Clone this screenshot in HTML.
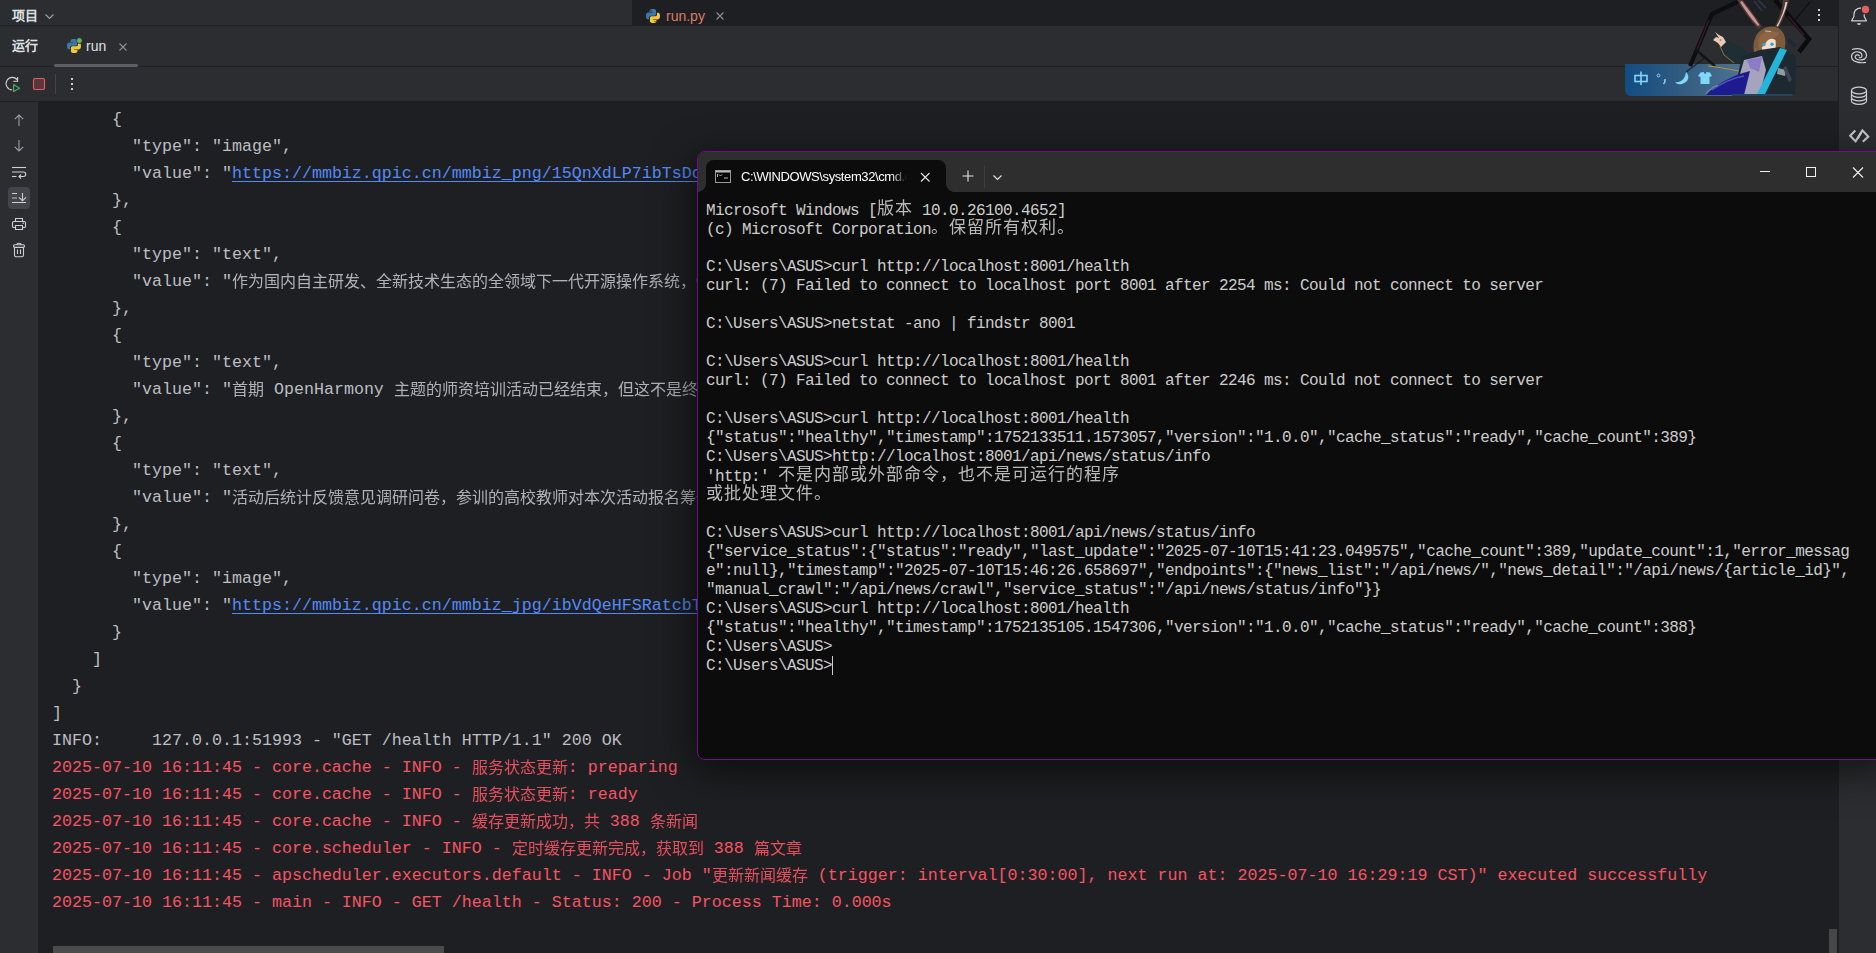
<!DOCTYPE html>
<html lang="zh-CN"><head><meta charset="utf-8">
<style>
*{margin:0;padding:0;box-sizing:border-box}
html,body{width:1876px;height:953px;overflow:hidden;background:#2B2D30;font-family:"Liberation Sans",sans-serif;color:#DFE1E5;position:relative}
.abs{position:absolute}
svg{position:absolute;overflow:visible}
#topL{left:0;top:0;width:632px;height:25px;background:#2B2D30}
#topR{left:632px;top:0;width:1207px;height:25px;background:#1E1F22}
#b1{left:0;top:25px;width:1839px;height:1px;background:#1E1F22}
#runhdr{left:0;top:26px;width:1839px;height:40px;background:#2B2D30}
#b2{left:0;top:66px;width:1839px;height:1px;background:#1E1F22}
#tool{left:0;top:67px;width:1839px;height:34px;background:#2B2D30}
#gut{left:0;top:102px;width:38px;height:851px;background:#2B2D30}
#b3{left:0;top:101px;width:38px;height:1px;background:#1E1F22}
#con{left:38px;top:101px;width:1800px;height:852px;background:#1E1F22;overflow:hidden}
#rside{left:1838px;top:0;width:38px;height:953px;background:#2B2D30;border-left:1px solid #1E1F22}
.mono{font-family:"Liberation Mono",monospace}
.ln{position:absolute;left:14px;height:27px;line-height:27px;font-size:16.6667px;color:#BCBEC4;white-space:pre;font-family:"Liberation Mono",monospace}
.ln.r{color:#F75464}
.ln .lk{color:#548AF7;text-decoration:underline;text-underline-offset:3px}
#lines{left:0;top:5px}
.cj{font-size:16px;position:relative;top:1px;opacity:.92}
.ui{font-size:13px;white-space:pre;line-height:16px}
#term{left:697px;top:151px;width:1200px;height:609px;border:1px solid #6E0F8E;border-radius:8px 0 0 8px;background:#0C0C0C;box-shadow:-4px 10px 40px rgba(0,0,0,.6);overflow:hidden}
#ttl{left:0;top:0;width:100%;height:40px;background:#2E2E2E}
#ttab{left:8px;top:8px;width:240px;height:32px;background:#0C0C0C;border-radius:8px 8px 0 0}
#tlines{left:8px;top:49px}
.tl{position:absolute;left:0;height:19px;line-height:19px;font-size:16px;letter-spacing:-0.6px;color:#CCCCCC;white-space:pre;font-family:"Liberation Mono",monospace}
.tc{letter-spacing:1px;font-size:17px;position:relative;top:-1px;opacity:.9}
</style></head><body>
<div class="abs" id="topL"></div>
<div class="abs" id="topR"></div>
<div class="abs" id="b1"></div>
<div class="abs" id="runhdr"></div>
<div class="abs" id="b2"></div>
<div class="abs" id="tool"></div>
<div class="abs" id="gut"></div>
<div class="abs" id="b3"></div>
<div class="abs" id="rside"></div>

<!-- top-left project -->
<div class="abs ui" style="left:12px;top:8px;font-weight:bold;color:#DFE1E5">项目</div>
<svg style="left:0;top:0" width="1" height="1"><path d="M45.5 14.5 L49.5 18.5 L53.5 14.5" fill="none" stroke="#9FA2A8" stroke-width="1.1"/></svg>

<!-- editor tab -->
<svg style="left:645px;top:8px" width="16" height="16" viewBox="0 0 16 16"><path fill="#3C78AA" d="M7.9 1C4.4 1 4.6 2.5 4.6 2.5V4.1H8V4.6H3.2S1 4.35 1 7.9C1 11.4 2.9 11.3 2.9 11.3H4V9.6S3.95 7.7 5.9 7.7H9.3S11.1 7.73 11.1 5.95V3S11.4 1 7.9 1Z"/><circle cx="6" cy="2.7" r=".6" fill="#1E1F22"/><path fill="#F2C83C" d="M8.1 15C11.6 15 11.4 13.5 11.4 13.5V11.9H8V11.4H12.8S15 11.65 15 8.1C15 4.6 13.1 4.7 13.1 4.7H12V6.4S12.05 8.3 10.1 8.3H6.7S4.9 8.27 4.9 10.05V13S4.6 15 8.1 15Z"/><circle cx="10" cy="13.3" r=".6" fill="#1E1F22"/></svg>
<div class="abs ui" style="left:666px;top:8px;font-size:14px;color:#DB7C68">run.py</div>
<svg style="left:0;top:0" width="1" height="1"><path d="M716.5 12.5 L723.5 19.5 M723.5 12.5 L716.5 19.5" stroke="#8C8F94" stroke-width="1.1"/></svg>

<!-- run header -->
<div class="abs ui" style="left:12px;top:38px;font-weight:bold;color:#DFE1E5">运行</div>
<svg style="left:66px;top:38px" width="16" height="16" viewBox="0 0 16 16"><path fill="#3C78AA" d="M7.9 1C4.4 1 4.6 2.5 4.6 2.5V4.1H8V4.6H3.2S1 4.35 1 7.9C1 11.4 2.9 11.3 2.9 11.3H4V9.6S3.95 7.7 5.9 7.7H9.3S11.1 7.73 11.1 5.95V3S11.4 1 7.9 1Z"/><path fill="#F2C83C" d="M8.1 15C11.6 15 11.4 13.5 11.4 13.5V11.9H8V11.4H12.8S15 11.65 15 8.1C15 4.6 13.1 4.7 13.1 4.7H12V6.4S12.05 8.3 10.1 8.3H6.7S4.9 8.27 4.9 10.05V13S4.6 15 8.1 15Z"/><circle cx="13.3" cy="2.6" r="2.9" fill="#5FB865" stroke="#2B2D30" stroke-width=".8"/></svg>
<div class="abs ui" style="left:86px;top:38px;font-size:14px;color:#DFE1E5">run</div>
<svg style="left:0;top:0" width="1" height="1"><path d="M119.5 43.5 L126.5 50.5 M126.5 43.5 L119.5 50.5" stroke="#8C8F94" stroke-width="1.1"/></svg>
<div class="abs" style="left:54px;top:64px;width:84px;height:3px;background:#5B5E64;border-radius:2px"></div>

<!-- toolbar -->
<svg style="left:0;top:0" width="1" height="1">
<path d="M17.5 80.2 A6.2 6.2 0 1 0 12.2 89.8" fill="none" stroke="#CED0D6" stroke-width="1.1"/>
<path d="M17.6 77 V81.3 H13.2" fill="none" stroke="#CED0D6" stroke-width="1.1"/>
<path d="M13.6 84.6 L19.6 88.2 L13.6 91.6 Z" fill="#213524" stroke="#55A862" stroke-width="1.2" stroke-linejoin="round"/>
<rect x="33.5" y="78.5" width="11" height="11" rx="1.5" fill="#5E3538" stroke="#E06060" stroke-width="1.1"/>
<rect x="55" y="74" width="1" height="20" fill="#43454A"/>
<rect x="71" y="78" width="2" height="2" fill="#CED0D6"/><rect x="71" y="83" width="2" height="2" fill="#CED0D6"/><rect x="71" y="88" width="2" height="2" fill="#CED0D6"/>
</svg>

<!-- gutter icons -->
<svg style="left:0;top:0" width="1" height="1">
<g fill="none" stroke="#9A9DA3" stroke-width="1.1">
<path d="M19 126 V115 M14.8 119.2 L19 115 L23.2 119.2"/>
<path d="M19 140 V151 M14.8 146.8 L19 151 L23.2 146.8"/>
</g>
<rect x="8" y="187" width="22" height="22" rx="4" fill="#43454A"/>
<g fill="none" stroke="#CED0D6" stroke-width="1.1">
<path d="M12 167.5 H26"/>
<path d="M12 172 H23.5 A2.25 2.25 0 0 1 23.5 176.5 H19 M21 174.5 L19 176.5 L21 178.5"/>
<path d="M12 176.5 H16.5"/>
<path d="M12 193.5 H17 M12 202.5 H26 M22.5 193 V200.5 M19 197.3 L22.5 200.8 L26 197.3"/>
<path d="M15.5 221.5 V218.5 H22.5 V221.5 M15 227.5 H13.8 A1.3 1.3 0 0 1 12.5 226.2 V222.8 A1.3 1.3 0 0 1 13.8 221.5 H24.2 A1.3 1.3 0 0 1 25.5 222.8 V226.2 A1.3 1.3 0 0 1 24.2 227.5 H23 M15.5 225.5 H22.5 V229.5 H15.5 Z"/>
<rect x="13.5" y="244.8" width="11" height="2.6" rx="1.3"/><path d="M16.8 244.8 A2.2 1.6 0 0 1 21.2 244.8 M14.5 247.4 V255 A1.8 1.8 0 0 0 16.3 256.8 H21.7 A1.8 1.8 0 0 0 23.5 255 V247.4 M17.5 249.5 V254 M20.5 249.5 V254"/>
</g>
<rect x="12" y="197" width="5" height="2" fill="#7E8187"/>
<rect x="22.6" y="222.6" width="1.3" height="1.3" fill="#CED0D6"/>
</svg>

<!-- console -->
<div class="abs" id="con">
<div class="abs" id="lines">
<div class="ln" style="top:0px">      {</div>
<div class="ln" style="top:27px">        "type": "image",</div>
<div class="ln" style="top:54px">        "value": "<span class="lk">https://mmbiz.qpic.cn/mmbiz_png/15QnXdLP7ibTsDcz4zsNvh</span></div>
<div class="ln" style="top:81px">      },</div>
<div class="ln" style="top:108px">      {</div>
<div class="ln" style="top:135px">        "type": "text",</div>
<div class="ln" style="top:162px">        "value": "<span class="cj">作为国内自主研发、全新技术生态的全领域下一代开源操作系统，</span>OpenHarmony</div>
<div class="ln" style="top:189px">      },</div>
<div class="ln" style="top:216px">      {</div>
<div class="ln" style="top:243px">        "type": "text",</div>
<div class="ln" style="top:270px">        "value": "<span class="cj">首期</span> OpenHarmony <span class="cj">主题的师资培训活动已经结束，但这不是终点</span></div>
<div class="ln" style="top:297px">      },</div>
<div class="ln" style="top:324px">      {</div>
<div class="ln" style="top:351px">        "type": "text",</div>
<div class="ln" style="top:378px">        "value": "<span class="cj">活动后统计反馈意见调研问卷，参训的高校教师对本次活动报名筹备</span></div>
<div class="ln" style="top:405px">      },</div>
<div class="ln" style="top:432px">      {</div>
<div class="ln" style="top:459px">        "type": "image",</div>
<div class="ln" style="top:486px">        "value": "<span class="lk">https://mmbiz.qpic.cn/mmbiz_jpg/ibVdQeHFSRatcbTqHhsYa</span></div>
<div class="ln" style="top:513px">      }</div>
<div class="ln" style="top:540px">    ]</div>
<div class="ln" style="top:567px">  }</div>
<div class="ln" style="top:594px">]</div>
<div class="ln" style="top:621px">INFO:     127.0.0.1:51993 - "GET /health HTTP/1.1" 200 OK</div>
<div class="ln r" style="top:648px">2025-07-10 16:11:45 - core.cache - INFO - <span class="cj">服务状态更新</span>: preparing</div>
<div class="ln r" style="top:675px">2025-07-10 16:11:45 - core.cache - INFO - <span class="cj">服务状态更新</span>: ready</div>
<div class="ln r" style="top:702px">2025-07-10 16:11:45 - core.cache - INFO - <span class="cj">缓存更新成功，共</span> 388 <span class="cj">条新闻</span></div>
<div class="ln r" style="top:729px">2025-07-10 16:11:45 - core.scheduler - INFO - <span class="cj">定时缓存更新完成，获取到</span> 388 <span class="cj">篇文章</span></div>
<div class="ln r" style="top:756px">2025-07-10 16:11:45 - apscheduler.executors.default - INFO - Job "<span class="cj">更新新闻缓存</span> (trigger: interval[0:30:00], next run at: 2025-07-10 16:29:19 CST)" executed successfully</div>
<div class="ln r" style="top:783px">2025-07-10 16:11:45 - main - INFO - GET /health - Status: 200 - Process Time: 0.000s</div>
</div>
<div class="abs" style="left:15px;top:845px;width:391px;height:7px;background:#4A4B4D"></div>
<div class="abs" style="left:1791px;top:828px;width:8px;height:24px;background:#474749"></div>
</div>

<!-- right sidebar icons -->
<svg style="left:0;top:0" width="1" height="1">
<g fill="none" stroke="#CED0D6" stroke-width="1.2">
<path d="M1861 8.2 H1860 A6 6 0 0 0 1854 14.2 V16.5 L1851.6 20.8 H1866.4 L1864.2 16.5 V14.3" stroke-linejoin="round"/>
<path d="M1852 49.5 C1858 47.5 1866.5 49 1866.5 55.5 C1866.5 59 1863 60.2 1859.5 60 C1856 59.8 1854.5 57.5 1855.5 55.8 C1856.5 54.5 1858.5 54.8 1859.5 56"/>
<path d="M1866 62.3 C1860 63.5 1851.5 62 1851.5 56.5 C1851.5 53 1855 51.5 1858 51.8 C1861 52 1862.5 54 1861.8 56.5 C1861.3 58 1859.8 58 1859 57.3"/>
<ellipse cx="1859" cy="90.5" rx="7.5" ry="3.3"/>
<path d="M1851.5 90.5 V101 A7.5 3.3 0 0 0 1866.5 101 V90.5 M1851.5 94 A7.5 3.3 0 0 0 1866.5 94 M1851.5 97.5 A7.5 3.3 0 0 0 1866.5 97.5"/>
</g>
<path d="M1855.3 130.6 L1850.2 135.8 L1855.6 141.4 L1862.4 130.4 L1868.3 136.6 L1862.8 141.8" fill="none" stroke="#C8CACE" stroke-width="2.1" stroke-linejoin="miter" stroke-miterlimit="3"/><path d="M1857.8 138.5 L1861.2 132.6" stroke="#C8CACE" stroke-width="2"/>
<circle cx="1865.5" cy="9.5" r="3.7" fill="#E3605F"/><path d="M1857 23.2 H1861 A2 1.8 0 0 1 1857 23.2 Z" fill="#CED0D6"/>
<rect x="1818" y="9" width="2" height="2" fill="#CED0D6"/><rect x="1818" y="14" width="2" height="2" fill="#CED0D6"/><rect x="1818" y="19" width="2" height="2" fill="#CED0D6"/>
</svg>

<!-- IME + character -->
<svg style="left:1620px;top:0" width="200" height="100" viewBox="0 0 200 100">
<defs>
<linearGradient id="ig" x1="0" y1="0" x2="1" y2="0">
<stop offset="0" stop-color="#134C84"/><stop offset=".35" stop-color="#335C80"/><stop offset=".7" stop-color="#4A7394"/><stop offset="1" stop-color="#2A4660"/>
</linearGradient>
</defs>
<path d="M5 64 H172.5 V96 H11 A6 6 0 0 1 5 90 Z" fill="url(#ig)"/>
<!-- blades -->
<path d="M119 1 L92 14 L70 66" fill="none" stroke="#0D0E12" stroke-width="4.2" stroke-linejoin="miter"/>
<path d="M89 20 L76 52" fill="none" stroke="#4A1A28" stroke-width="1.4" opacity=".8"/>
<path d="M75 49 L95 66" fill="none" stroke="#111216" stroke-width="2.5" opacity=".9"/>
<path d="M66 72 L86 57" fill="none" stroke="#15161A" stroke-width="1.5" opacity=".7"/>
<path d="M155 0 L189 39 L179 52" fill="none" stroke="#0B0C10" stroke-width="4.6" stroke-linejoin="miter"/>
<path d="M168 16 L184 35" fill="none" stroke="#4A1828" stroke-width="1.5" opacity=".8"/>
<path d="M190 2 L175 20" fill="none" stroke="#101116" stroke-width="1.3"/>
<path d="M134 1 L142 11 M138 0 L146 8" fill="none" stroke="#2A3548" stroke-width="2"/>
<path d="M168 40 L176 46" fill="none" stroke="#1E2838" stroke-width="3"/>
<!-- ears -->
<path d="M117 0 C122 8 130 20 138 29 L142 27 C136 16 127 6 123 0 Z" fill="#4E3A32"/>
<path d="M120 2 C125 10 131 19 138 26 L139.5 25 C134 16 127 8 122 1 Z" fill="#C89494"/>
<path d="M163 0 C162 10 158 20 154 28 L158 29 C163 20 167 10 169 0 Z" fill="#4E3A32"/>
<path d="M165.5 2 C164 10 161 19 156.5 26 L158 26.5 C162 18 166 10 167.5 2 Z" fill="#E6CCC4"/>
<!-- hair/head -->
<path d="M134 52 C131 38 140 26 152 26.5 C163 27 167 37 165 47 C164 53 161 56 157 57 L140 57 Z" fill="#7C5A3C"/>
<path d="M141 43 C141 52 146 56 150 55.5 C155 54.5 156.5 49 155.5 40 C150 37 145 38 141 43 Z" fill="#F4DECE"/>
<path d="M138 40 C141 32 150 29 159 33 C157 39 151 37 147 41 C145 45 142 47 139 50 Z" fill="#8E6646"/>
<path d="M136 48 C133 60 128 68 122 76" fill="none" stroke="#9A7238" stroke-width="1"/>
<circle cx="144" cy="44.5" r="1.7" fill="#2AA8C8"/><circle cx="152" cy="44.3" r="1.7" fill="#2AA8C8"/>
<path d="M145 31 L151 31.5" stroke="#A8C8D0" stroke-width="1.2"/>
<!-- arm -->
<path d="M100 44 L106 40 L122 48 L132 57 L129 64 L113 63 L101 55 Z" fill="#1F2D35"/>
<path d="M100 46 L104 55 L114 63" stroke="#B08A30" stroke-width=".8" fill="none"/>
<path d="M95 32 L99 38 L96 37 L93 40 L98 43 L101 47 L106 42 L103 37 L99 35 Z" fill="#F0C8B0"/>
<circle cx="100.5" cy="40" r=".9" fill="#30B0C8"/>
<!-- body -->
<path d="M122 56 L140 50 L160 47 L176 56 L175 94 L120 94 L118 74 Z" fill="#1C2930"/>
<path d="M124 60 L142 56 L146 70 L140 94 L122 94 L120 74 Z" fill="#A6A4BC"/>
<path d="M127 60 L142 57 L139 72 L130 68 Z" fill="#8C7CC8"/>
<path d="M160 48 L167 50 L145 94 L137 94 Z" fill="#24B6DA"/>
<path d="M86 95 C94 86 110 76 130 71 L124 95 Z" fill="#1E1A90"/>
<path d="M92 90 C102 83 112 78 124 76" stroke="#4A5AC0" stroke-width="1.4" fill="none"/>
<path d="M86 94 C89 90 93 87 98 85" stroke="#7888A8" stroke-width="1.3" fill="none"/>
<path d="M88 66 C98 67 108 69 119 71" stroke="#B8962A" stroke-width="1" fill="none"/>
<path d="M158 68 L166 70 L165 76 L157 74 Z" fill="#C8CCD0" opacity=".7"/>
<path d="M166 66 L172 80 L169 82 L163 68 Z" fill="#3A4650"/>
<rect x="112" y="94" width="60" height="2" fill="#26435E"/>
<!-- IME glyphs -->
<g fill="none" stroke="#7FD8F8" stroke-width="1.6">
<rect x="15" y="75.5" width="12" height="6"/>
<path d="M21 71.5 V85"/>
<circle cx="38.5" cy="75.5" r="1.4" stroke-width="1"/>
<path d="M45 79 Q45.5 82 43.5 84"/>
</g>
<path d="M66 72 C70 76 69 82 62 84 C58 84.8 56 83.5 55 82 C60 83 65 80 66 72 Z" fill="#7FD8F8"/>
<path d="M80.5 72.5 L84 72 Q84 74 85 74 Q86 74 86.5 72 L90 72.5 L92 76 L89.5 77 V84 H80.5 V77 L78 76 Z" fill="#7FD8F8"/>
</svg>

<!-- terminal window -->
<div class="abs" id="term">
<div class="abs" id="ttl"></div>
<div class="abs" id="ttab"></div>
<div class="abs" style="left:0;top:32px;width:8px;height:8px;background:radial-gradient(circle 8px at 0 0,#2E2E2E 7.5px,#0C0C0C 8px)"></div>
<div class="abs" style="left:248px;top:32px;width:8px;height:8px;background:radial-gradient(circle 8px at 100% 0,#2E2E2E 7.5px,#0C0C0C 8px)"></div>
<svg style="left:17px;top:18px" width="16" height="13" viewBox="0 0 16 13"><rect x=".5" y=".5" width="15" height="12" fill="#050505" stroke="#9A9A9A"/><rect x="1" y="1" width="14" height="1.5" fill="#BDBDBD"/><path d="M2.5 4 V7 M4 4.5 L5.5 6 L7 4.5 M9 8 H13" stroke="#CCCCCC" stroke-width=".9"/></svg>
<div class="abs" style="left:43px;top:16px;width:166px;height:18px;overflow:hidden;font-size:13px;letter-spacing:-0.4px;line-height:18px;white-space:pre;color:#FFFFFF;-webkit-mask-image:linear-gradient(90deg,#000 150px,transparent 166px)">C:\WINDOWS\system32\cmd.exe</div>
<svg style="left:0;top:0" width="1" height="1">
<path d="M223 21 L231.5 29.5 M231.5 21 L223 29.5" stroke="#E6E6E6" stroke-width="1.1"/>
<path d="M270 18.5 V29.5 M264.5 24 H275.5" stroke="#E6E6E6" stroke-width="1.1"/>
<rect x="286" y="13.5" width="1" height="23" fill="#3E3E3E"/>
<path d="M295.5 23.5 L299.5 27.5 L303.5 23.5" fill="none" stroke="#E6E6E6" stroke-width="1.1"/>
<rect x="1062" y="19" width="10" height="1" fill="#F0F0F0"/>
<rect x="1108.5" y="15.5" width="9" height="9" fill="none" stroke="#F0F0F0" stroke-width="1"/>
<path d="M1155 15.5 L1165 25.5 M1165 15.5 L1155 25.5" stroke="#F0F0F0" stroke-width="1.1"/>
</svg>
<div class="abs" id="tlines">
<div class="tl" style="top:0px">Microsoft Windows [<span class="tc">版本</span> 10.0.26100.4652]</div>
<div class="tl" style="top:19px">(c) Microsoft Corporation<span class="tc">。保留所有权利。</span></div>
<div class="tl" style="top:57px">C:\Users\ASUS&gt;curl http://localhost:8001/health</div>
<div class="tl" style="top:76px">curl: (7) Failed to connect to localhost port 8001 after 2254 ms: Could not connect to server</div>
<div class="tl" style="top:114px">C:\Users\ASUS&gt;netstat -ano | findstr 8001</div>
<div class="tl" style="top:152px">C:\Users\ASUS&gt;curl http://localhost:8001/health</div>
<div class="tl" style="top:171px">curl: (7) Failed to connect to localhost port 8001 after 2246 ms: Could not connect to server</div>
<div class="tl" style="top:209px">C:\Users\ASUS&gt;curl http://localhost:8001/health</div>
<div class="tl" style="top:228px">{"status":"healthy","timestamp":1752133511.1573057,"version":"1.0.0","cache_status":"ready","cache_count":389}</div>
<div class="tl" style="top:247px">C:\Users\ASUS&gt;http://localhost:8001/api/news/status/info</div>
<div class="tl" style="top:266px">'http:' <span class="tc">不是内部或外部命令，也不是可运行的程序</span></div>
<div class="tl" style="top:285px"><span class="tc">或批处理文件。</span></div>
<div class="tl" style="top:323px">C:\Users\ASUS&gt;curl http://localhost:8001/api/news/status/info</div>
<div class="tl" style="top:342px">{"service_status":{"status":"ready","last_update":"2025-07-10T15:41:23.049575","cache_count":389,"update_count":1,"error_messag</div>
<div class="tl" style="top:361px">e":null},"timestamp":"2025-07-10T15:46:26.658697","endpoints":{"news_list":"/api/news/","news_detail":"/api/news/{article_id}",</div>
<div class="tl" style="top:380px">"manual_crawl":"/api/news/crawl","service_status":"/api/news/status/info"}}</div>
<div class="tl" style="top:399px">C:\Users\ASUS&gt;curl http://localhost:8001/health</div>
<div class="tl" style="top:418px">{"status":"healthy","timestamp":1752135105.1547306,"version":"1.0.0","cache_status":"ready","cache_count":388}</div>
<div class="tl" style="top:437px">C:\Users\ASUS&gt;</div>
<div class="tl" style="top:456px">C:\Users\ASUS&gt;</div>
</div>
<div class="abs" style="left:134px;top:504px;width:1px;height:19px;background:#CCCCCC"></div>
</div>
</body></html>
